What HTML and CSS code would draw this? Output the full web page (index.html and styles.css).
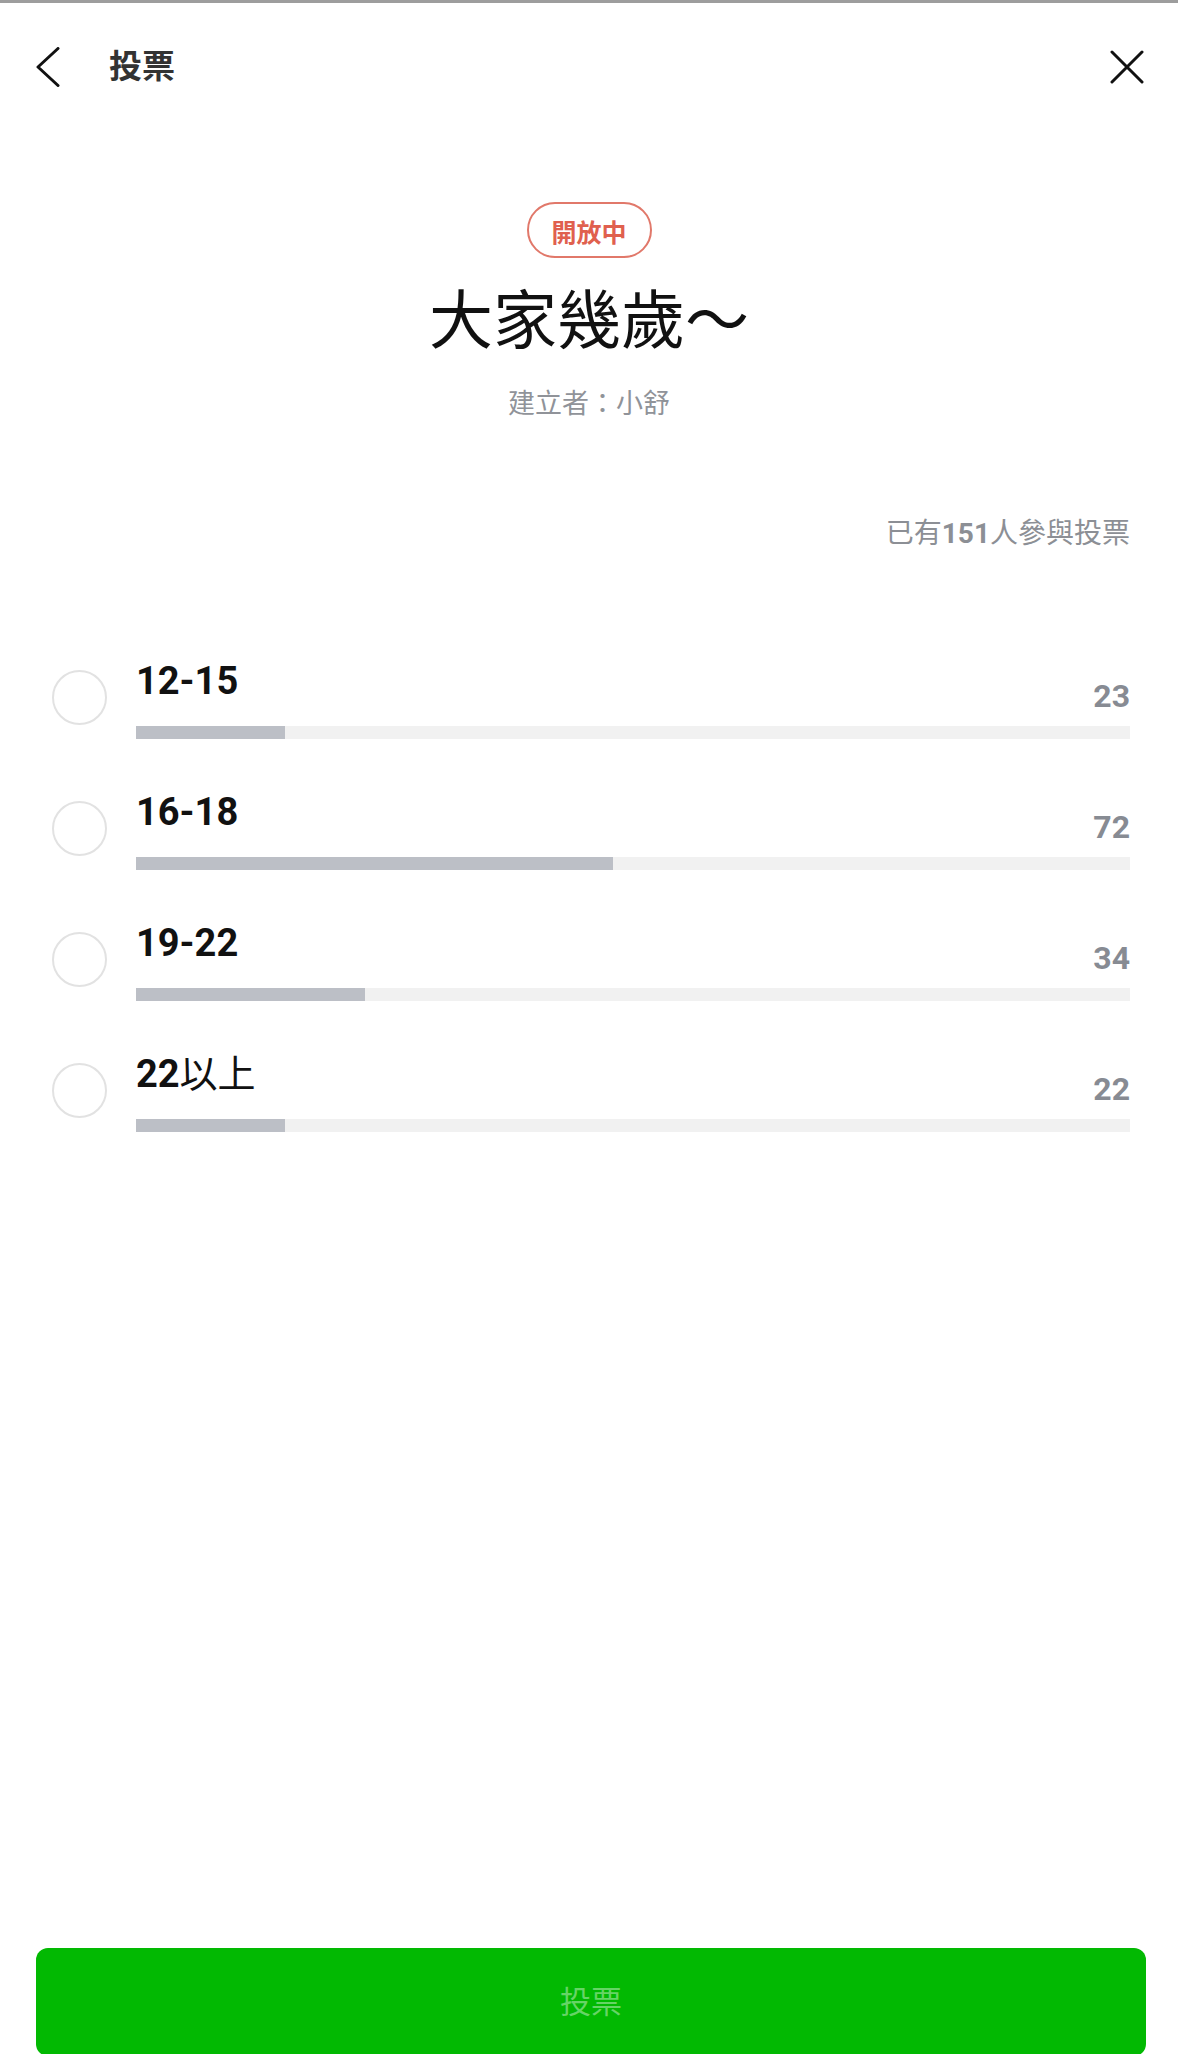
FILE: index.html
```html
<!DOCTYPE html>
<html lang="zh-Hant">
<head>
<meta charset="utf-8">
<title>投票</title>
<link rel="stylesheet" href="styles.css">
</head>
<body>
<div class="page">
  <div class="topline"></div>
  <header class="header">
    <button class="icon-btn back" aria-label="back">
      <svg width="24" height="40" viewBox="0 0 24 40"><polyline points="22,1.5 2,20 22,38.5" fill="none" stroke="#111" stroke-width="3" stroke-linecap="round" stroke-linejoin="round"/></svg>
    </button>
    <h1 class="header-title">投票</h1>
    <button class="icon-btn close" aria-label="close">
      <svg width="34" height="34" viewBox="0 0 34 34"><path d="M2 2 L32 32 M32 2 L2 32" fill="none" stroke="#111" stroke-width="3" stroke-linecap="round"/></svg>
    </button>
  </header>

  <main class="content">
    <div class="badge-wrap"><span class="badge">開放中</span></div>
    <h2 class="poll-title">大家幾歲～</h2>
    <p class="creator">建立者：小舒</p>
    <p class="participants">已有<b>151</b>人參與投票</p>

    <ul class="options">
      <li class="option">
        <span class="radio"></span>
        <div class="opt-body">
          <div class="opt-top"><span class="opt-label">12-15</span><span class="opt-count">23</span></div>
          <div class="bar"><div class="bar-fill" style="width:15%"></div></div>
        </div>
      </li>
      <li class="option">
        <span class="radio"></span>
        <div class="opt-body">
          <div class="opt-top"><span class="opt-label">16-18</span><span class="opt-count">72</span></div>
          <div class="bar"><div class="bar-fill" style="width:48%"></div></div>
        </div>
      </li>
      <li class="option">
        <span class="radio"></span>
        <div class="opt-body">
          <div class="opt-top"><span class="opt-label">19-22</span><span class="opt-count">34</span></div>
          <div class="bar"><div class="bar-fill" style="width:23%"></div></div>
        </div>
      </li>
      <li class="option">
        <span class="radio"></span>
        <div class="opt-body">
          <div class="opt-top"><span class="opt-label">22<span class="cjk">以上</span></span><span class="opt-count">22</span></div>
          <div class="bar"><div class="bar-fill" style="width:15%"></div></div>
        </div>
      </li>
    </ul>
  </main>

  <button class="vote-btn">投票</button>
</div>
</body>
</html>
```

FILE: styles.css
```css
* { box-sizing: border-box; }
html, body {
  margin: 0;
  padding: 0;
  background: #fff;
  overflow: hidden;
}
body {
  font-family: Roboto, "Noto Sans CJK TC", "Noto Sans", sans-serif;
  color: #111;
}
.page {
  width: 1178px;
  height: 2054px;
  display: flex;
  flex-direction: column;
  overflow: hidden;
}
.topline {
  height: 3px;
  background: #9d9d9d;
  flex: none;
}
.header {
  height: 127px;
  flex: none;
  display: flex;
  align-items: center;
  padding: 0 34px 0 36px;
}
.icon-btn {
  border: 0;
  background: none;
  padding: 0;
  margin: 0;
  display: flex;
  align-items: center;
  justify-content: center;
}
.back { width: 24px; height: 40px; }
.close { width: 34px; height: 34px; margin-left: auto; }
.header-title {
  margin: 0 0 0 49px;
  font-size: 33px;
  font-weight: 700;
  color: #333;
  line-height: 40px;
}
.content {
  flex: 1;
  display: flex;
  flex-direction: column;
}
.badge-wrap {
  margin-top: 72px;
  display: flex;
  justify-content: center;
}
.badge {
  display: inline-block;
  height: 56px;
  width: 125px;
  border: 2px solid #e1786a;
  border-radius: 28px;
  color: #e0604e;
  font-size: 25px;
  font-weight: 700;
  line-height: 60px;
  text-align: center;
}
.poll-title {
  margin: 26px 0 0;
  text-align: center;
  font-size: 64px;
  font-weight: 400;
  line-height: 76px;
  color: #111;
}
.creator {
  margin: 26px 0 0;
  text-align: center;
  font-size: 27px;
  line-height: 36px;
  color: #909399;
}
.participants {
  margin: 94px 0 0;
  padding-right: 48px;
  text-align: right;
  font-size: 28px;
  line-height: 36px;
  color: #8c8f95;
}
.participants b { font-weight: 700; }
.options {
  list-style: none;
  margin: 80px 0 0;
  padding: 0;
}
.option {
  height: 131px;
  display: flex;
  align-items: center;
  padding: 0 48px 0 52px;
  gap: 29px;
}
.radio {
  flex: none;
  width: 55px;
  height: 55px;
  border-radius: 50%;
  border: 2px solid #e2e2e2;
}
.opt-body {
  flex: 1;
  display: flex;
  flex-direction: column;
}
.opt-top {
  display: flex;
  justify-content: space-between;
  align-items: flex-end;
}
.opt-label {
  font-size: 38px;
  font-weight: 700;
  line-height: 48px;
  color: #111;
}
.opt-label .cjk { font-weight: 400; }
.opt-count {
  font-size: 32px;
  font-weight: 700;
  line-height: 32px;
  color: #878b93;
  margin-bottom: -7px;
}
.bar {
  margin-top: 21px;
  height: 13px;
  background: #f1f1f1;
}
.bar-fill {
  height: 100%;
  background: #bcbfc6;
}
.vote-btn {
  flex: none;
  margin: 0 32px -2px 36px;
  height: 108px;
  padding: 0 0 6px;
  border: 0;
  border-radius: 12px;
  background: #02b902;
  color: #66d466;
  font-family: "Noto Sans CJK TC", sans-serif;
  font-size: 31px;
  font-weight: 400;
}
```
